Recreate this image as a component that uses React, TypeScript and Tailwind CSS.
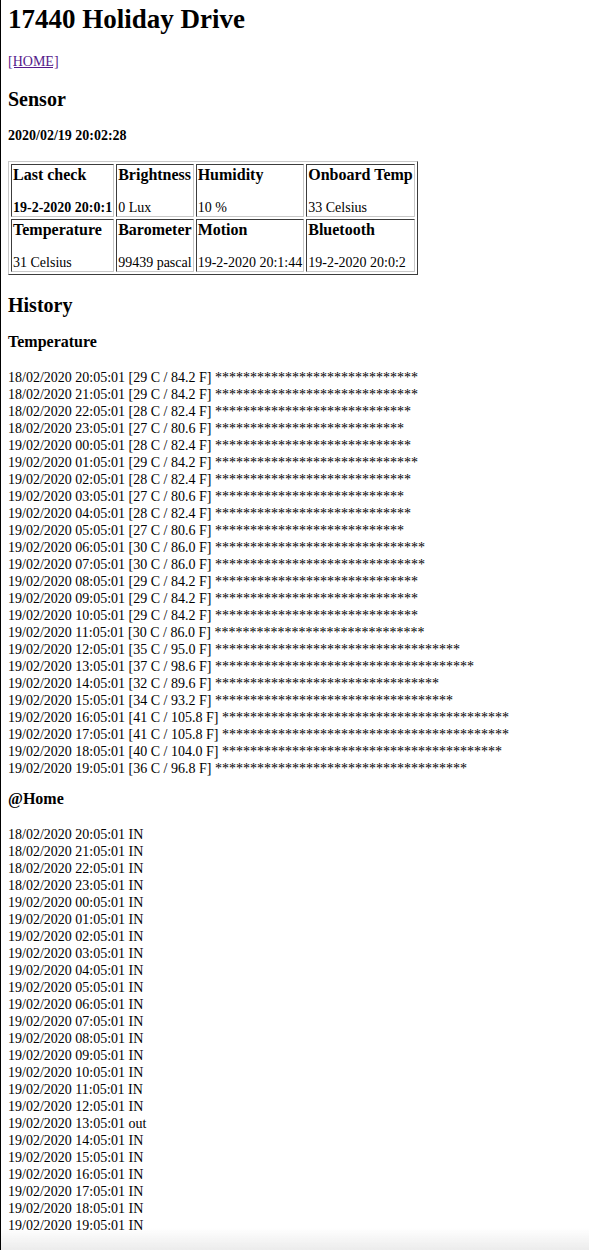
import React from "react";

const times = [
  "18/02/2020 20:05:01",
  "18/02/2020 21:05:01",
  "18/02/2020 22:05:01",
  "18/02/2020 23:05:01",
  "19/02/2020 00:05:01",
  "19/02/2020 01:05:01",
  "19/02/2020 02:05:01",
  "19/02/2020 03:05:01",
  "19/02/2020 04:05:01",
  "19/02/2020 05:05:01",
  "19/02/2020 06:05:01",
  "19/02/2020 07:05:01",
  "19/02/2020 08:05:01",
  "19/02/2020 09:05:01",
  "19/02/2020 10:05:01",
  "19/02/2020 11:05:01",
  "19/02/2020 12:05:01",
  "19/02/2020 13:05:01",
  "19/02/2020 14:05:01",
  "19/02/2020 15:05:01",
  "19/02/2020 16:05:01",
  "19/02/2020 17:05:01",
  "19/02/2020 18:05:01",
  "19/02/2020 19:05:01",
];

const temps: [number, string][] = [
  [29, "84.2"],
  [29, "84.2"],
  [28, "82.4"],
  [27, "80.6"],
  [28, "82.4"],
  [29, "84.2"],
  [28, "82.4"],
  [27, "80.6"],
  [28, "82.4"],
  [27, "80.6"],
  [30, "86.0"],
  [30, "86.0"],
  [29, "84.2"],
  [29, "84.2"],
  [29, "84.2"],
  [30, "86.0"],
  [35, "95.0"],
  [37, "98.6"],
  [32, "89.6"],
  [34, "93.2"],
  [41, "105.8"],
  [41, "105.8"],
  [40, "104.0"],
  [36, "96.8"],
];

const home = times.map((t) => (t === "19/02/2020 13:05:01" ? "out" : "IN"));

function Cell({ title, value, boldValue }: { title: string; value: string; boldValue?: boolean }) {
  return (
    <td className="px-[1px] pt-[1px] pb-0 align-top border border-t-[#3c3c3c] border-l-[#3c3c3c] border-b-[#c8c8c8] border-r-[#c8c8c8] whitespace-nowrap">
      <div className="font-bold text-[16px] leading-[17px]">{title}</div>
      <div className="h-[16px]" />
      <div className={boldValue ? "font-bold leading-[17px]" : "leading-[17px]"}>{value}</div>
    </td>
  );
}

export default function App() {
  return (
    <div
      className="relative min-h-[1250px] border-l border-black bg-white pl-[7px] text-[14px] leading-[17px] text-black"
      style={{ fontFamily: '"Liberation Serif", "Times New Roman", serif' }}
    >
      <h1 className="pt-[4px] text-[27px] leading-[31px] font-bold">17440 Holiday Drive</h1>
      <div className="mt-[18px]">
        <a href="#" className="text-[#551a8b] underline">
          [HOME]
        </a>
      </div>
      <h2 className="mt-[18px] text-[20px] leading-[23px] font-bold">Sensor</h2>
      <h4 className="mt-[16px] font-bold">2020/02/19 20:02:28</h4>
      <table className="mt-[17px] border-separate border-spacing-[2px] border border-t-[#c8c8c8] border-l-[#c8c8c8] border-b-[#3c3c3c] border-r-[#3c3c3c]">
        <tbody>
          <tr>
            <Cell title="Last check" value="19-2-2020 20:0:1" boldValue />
            <Cell title="Brightness" value="0 Lux" />
            <Cell title="Humidity" value="10 %" />
            <Cell title="Onboard Temp" value="33 Celsius" />
          </tr>
          <tr>
            <Cell title="Temperature" value="31 Celsius" />
            <Cell title="Barometer" value="99439 pascal" />
            <Cell title="Motion" value="19-2-2020 20:1:44" />
            <Cell title="Bluetooth" value="19-2-2020 20:0:2" />
          </tr>
        </tbody>
      </table>
      <h2 className="mt-[19px] text-[20px] leading-[23px] font-bold">History</h2>
      <h4 className="mt-[16px] text-[16px] leading-[18px] font-bold">Temperature</h4>
      <div className="mt-[18px]">
        {times.map((t, i) => (
          <div key={t} className="whitespace-nowrap">
            {t} [{temps[i][0]} C / {temps[i][1]} F] {"*".repeat(temps[i][0])}
          </div>
        ))}
      </div>
      <h4 className="mt-[13px] text-[16px] leading-[18px] font-bold">@Home</h4>
      <div className="mt-[18px]">
        {times.map((t, i) => (
          <div key={t} className="whitespace-nowrap">
            {t} {home[i]}
          </div>
        ))}
      </div>
      <div className="fixed bottom-0 left-[1px] right-0 h-[22px] bg-linear-to-b from-[#ffffff00] to-[#ececec] pointer-events-none" />
    </div>
  );
}
